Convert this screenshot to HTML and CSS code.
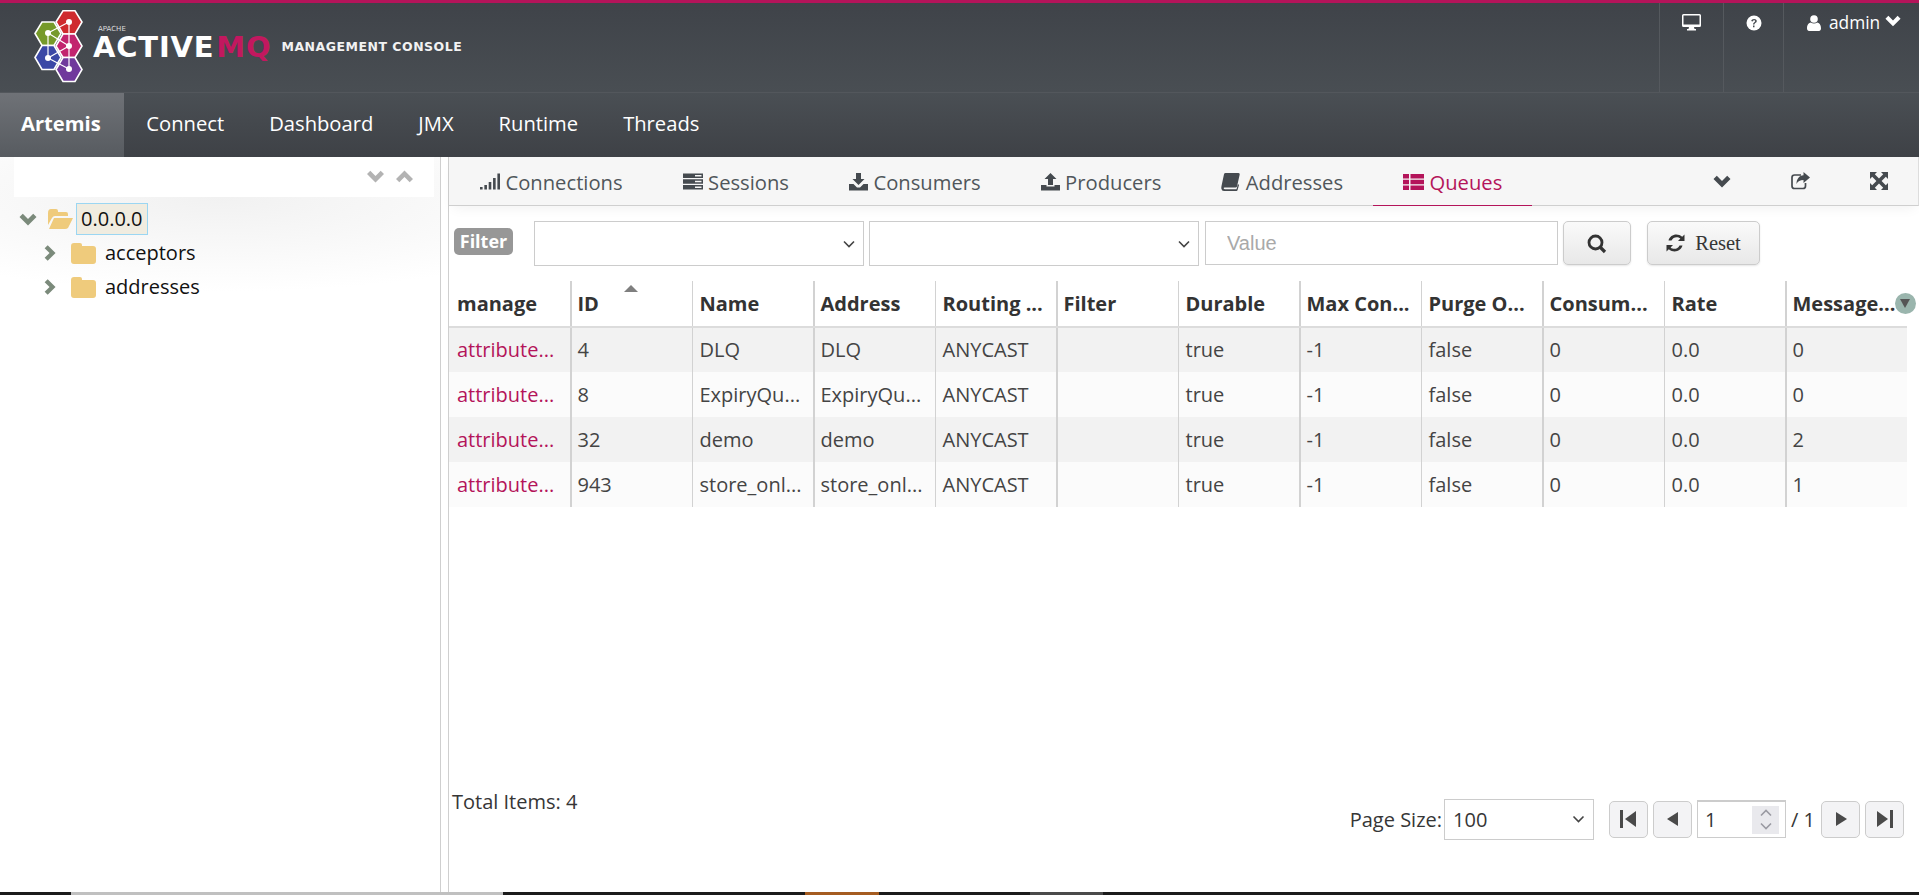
FILE: index.html
```html
<!DOCTYPE html>
<html lang="en">
<head>
    <meta charset="UTF-8">
    <title>ActiveMQ Artemis Console</title>
    <link rel="stylesheet" href="styles.css">
</head>
<body>
    <svg class="icon-defs" width="0" height="0">
        <symbol id="i-chev-down" viewBox="0 0 18 13"><path d="M0.5 4 L3.8 0.7 L9 6 L14.2 0.7 L17.5 4 L9 12.5 Z"/></symbol>
        <symbol id="i-chev-up" viewBox="0 0 18 13"><path d="M0.5 9 L3.8 12.3 L9 7 L14.2 12.3 L17.5 9 L9 0.5 Z"/></symbol>
        <symbol id="i-chev-right" viewBox="0 0 13 18"><path d="M4 0.5 L0.7 3.8 L6 9 L0.7 14.2 L4 17.5 L12.5 9 Z"/></symbol>
        <symbol id="i-caret" viewBox="0 0 12 8"><path d="M1 1.5 L6 6.5 L11 1.5" fill="none" stroke="#444" stroke-width="1.6"/></symbol>
    </svg>

    <header class="topbar">
        <div class="brand">
            <svg class="brand-logo" width="51" height="74" viewBox="0 0 51 74">
                <g stroke="#fff" stroke-width="1.6">
                    <path d="M2 23.5 L9 12 L21 12 L28 23.5 L21 35.5 L9 35.5 Z" fill="#769a2a"/>
                    <path d="M2 47.5 L9 35.5 L21 35.5 L28 47.5 L21 59.5 L9 59.5 Z" fill="#3b48a6"/>
                    <path d="M23 12 L30 0.8 L42 0.8 L49 12 L42 24 L30 24 Z" fill="#cf2a2e"/>
                    <path d="M23 36 L30 24 L42 24 L49 36 L42 47.5 L30 47.5 Z" fill="#c2246e"/>
                    <path d="M23 59.5 L30 47.5 L42 47.5 L49 59.5 L42 71.5 L30 71.5 Z" fill="#70399c"/>
                </g>
                <path fill="none" stroke="#fff" stroke-width="1.2" d="M36 12 V59 M15 23 L36 12 M15 23 V48 M15 23 L36 36 M15 48 L36 36 M15 48 L36 59"/>
                <g fill="#fff">
                    <circle cx="36" cy="12" r="3"/><circle cx="36" cy="36" r="3"/><circle cx="36" cy="59" r="3"/>
                    <circle cx="15" cy="23" r="3"/><circle cx="15" cy="48" r="3"/>
                </g>
            </svg>
            <div class="brand-name">
                <span class="brand-apache">APACHE</span>
                <span class="brand-active">ACTIVE<em>MQ</em></span>
            </div>
            <span class="brand-sub">MANAGEMENT CONSOLE</span>
        </div>
        <div class="util">
            <div class="util-item util-monitor">
                <svg width="19" height="17" viewBox="0 0 19 17"><path fill="#fff" fill-rule="evenodd" d="M1.5 0 H17.5 A1.5 1.5 0 0 1 19 1.5 V11.5 A1.5 1.5 0 0 1 17.5 13 H12 L12.5 15 H14 V16.5 H5 V15 H6.5 L7 13 H1.5 A1.5 1.5 0 0 1 0 11.5 V1.5 A1.5 1.5 0 0 1 1.5 0 Z M1.5 1.5 V10.5 H17.5 V1.5 Z"/></svg>
            </div>
            <div class="util-item util-help">
                <svg width="16" height="16" viewBox="0 0 16 16"><circle cx="8" cy="8" r="7.5" fill="#fff"/><path d="M5.2 6 C5.4 3.2 10.8 3.2 10.8 6 C10.8 8 8.4 7.8 8.4 9.6 H7 C7 7.4 9.2 7.4 9.2 6.1 C9.2 5 7 5 6.8 6.5 Z M7 10.5 H8.5 V12.2 H7 Z" fill="#454a4f"/></svg>
            </div>
            <div class="util-item util-user">
                <svg width="14" height="16" viewBox="0 0 14 16"><circle cx="7" cy="4" r="3.8" fill="#fff"/><path d="M0 13.5 C0 9.5 2 8 3.8 7.6 C5.5 8.8 8.5 8.8 10.2 7.6 C12 8 14 9.5 14 13.5 C14 15 13 16 12 16 H2 C1 16 0 15 0 13.5Z" fill="#fff"/></svg>
                <span>admin</span>
                <svg class="util-chev" width="16" height="12"><use href="#i-chev-down"/></svg>
            </div>
        </div>
    </header>

    <nav class="mainnav">
        <a class="nav-link nav-active">Artemis</a>
        <a class="nav-link">Connect</a>
        <a class="nav-link">Dashboard</a>
        <a class="nav-link">JMX</a>
        <a class="nav-link">Runtime</a>
        <a class="nav-link">Threads</a>
    </nav>

    <main class="page">
        <aside class="tree-pane">
            <div class="tree-tools">
                <svg class="tool-chev" width="19" height="13"><use href="#i-chev-down"/></svg>
                <svg class="tool-chev" width="19" height="13"><use href="#i-chev-up"/></svg>
            </div>
            <ul class="tree">
                <li class="tree-row">
                    <svg class="tree-exp" width="18" height="13"><use href="#i-chev-down"/></svg>
                    <svg class="tree-folder" width="27" height="22" viewBox="0 0 27 22"><path fill="#efcb7c" d="M1 5 Q1 1 4 1 H9 Q11 1 11 3 V4 H19 Q21 4 21 6 V8 H8 Q6 8 5 10 L1 17 Z M7 10 H26 L21 20 Q20 21 18 21 H2 Z"/></svg>
                    <span class="tree-label tree-selected">0.0.0.0</span>
                </li>
                <li class="tree-row tree-child">
                    <svg class="tree-exp" width="12" height="18"><use href="#i-chev-right"/></svg>
                    <svg class="tree-folder" width="25" height="21" viewBox="0 0 25 21"><path fill="#efcb7c" d="M0 3 Q0 0 3 0 H9 Q11 0 11 2 V3 H22 Q25 3 25 6 V18 Q25 21 22 21 H3 Q0 21 0 18 Z"/></svg>
                    <span class="tree-label">acceptors</span>
                </li>
                <li class="tree-row tree-child">
                    <svg class="tree-exp" width="12" height="18"><use href="#i-chev-right"/></svg>
                    <svg class="tree-folder" width="25" height="21" viewBox="0 0 25 21"><path fill="#efcb7c" d="M0 3 Q0 0 3 0 H9 Q11 0 11 2 V3 H22 Q25 3 25 6 V18 Q25 21 22 21 H3 Q0 21 0 18 Z"/></svg>
                    <span class="tree-label">addresses</span>
                </li>
            </ul>
        </aside>

        <section class="content">
            <div class="tabs">
                <a class="tab">
                    <svg width="20" height="17" viewBox="0 0 23 17" preserveAspectRatio="none"><path fill="#454a4f" d="M0 14 H3 V16.5 H0Z M5 12 H8 V16.5 H5Z M10 9 H13 V16.5 H10Z M15 5 H18 V16.5 H15Z M20 0.5 H23 V16.5 H20Z"/></svg>
                    Connections
                </a>
                <a class="tab">
                    <svg width="20" height="17" viewBox="0 0 20 17"><path fill="#454a4f" fill-rule="evenodd" d="M0 0.5 H20 V5 H0Z M0 6.2 H20 V10.8 H0Z M0 12 H20 V16.5 H0Z M12 2 V3.5 H18.5 V2Z M12 7.8 V9.3 H18.5 V7.8Z M12 13.5 V15 H18.5 V13.5Z"/></svg>
                    Sessions
                </a>
                <a class="tab">
                    <svg width="19" height="18" viewBox="0 0 19 18"><path fill="#454a4f" d="M7 0 H12 V6 H15.5 L9.5 12 L3.5 6 H7Z M0 11 H4.5 L8 14.5 H11 L14.5 11 H19 V17.5 H0Z"/></svg>
                    Consumers
                </a>
                <a class="tab">
                    <svg width="19" height="18" viewBox="0 0 19 18"><path fill="#454a4f" d="M9.5 0 L15.5 6 H12 V12 H7 V6 H3.5Z M0 12 H5.5 V13.5 H13.5 V12 H19 V17.5 H0Z"/></svg>
                    Producers
                </a>
                <a class="tab">
                    <svg width="19" height="18" viewBox="0 0 19 18"><path fill="#454a4f" d="M4.5 0 H17.5 Q19 0 18.7 1.5 L16 13.5 Q15.7 14.5 14.5 14.5 H3.5 Q2.5 14.5 2.7 15.5 Q3 16.3 4 16.3 H15.5 L17 11 L18 12 L16.5 17.3 Q16.2 18 15.5 18 H3 Q0.7 18 0.3 15.5 Q0.2 14.5 0.5 13 L3 1.2 Q3.3 0 4.5 0 Z"/></svg>
                    Addresses
                </a>
                <a class="tab tab-active">
                    <svg width="21" height="16" viewBox="0 0 21 16"><path fill="#b4145a" d="M0 0 H6 V4.4 H0Z M7.5 0 H21 V4.4 H7.5Z M0 5.8 H6 V10.2 H0Z M7.5 5.8 H21 V10.2 H7.5Z M0 11.6 H6 V16 H0Z M7.5 11.6 H21 V16 H7.5Z"/></svg>
                    Queues
                </a>
                <div class="tab-tools">
                    <svg class="tab-chev" width="18" height="13"><use href="#i-chev-down"/></svg>
                    <svg width="19" height="18" viewBox="0 0 19 18"><path fill="none" stroke="#454a4f" stroke-width="1.7" d="M10 3 H3.5 Q1 3 1 5.5 V14 Q1 16.5 3.5 16.5 H12 Q14.5 16.5 14.5 14 V11"/><path fill="#454a4f" d="M12.5 0 L19 5.5 L12.5 11 V8 C9 8 7 9 5.5 12 C5.5 7 8 3.5 12.5 3.2Z"/></svg>
                    <svg width="18" height="18" viewBox="0 0 18 18"><path fill="#454a4f" d="M0 0 H7 L4.8 2.2 L9 6.4 L13.2 2.2 L11 0 H18 V7 L15.8 4.8 L11.6 9 L15.8 13.2 L18 11 V18 H11 L13.2 15.8 L9 11.6 L4.8 15.8 L7 18 H0 V11 L2.2 13.2 L6.4 9 L2.2 4.8 L0 7Z"/></svg>
                </div>
            </div>

            <div class="filter-bar">
                <span class="filter-badge">Filter</span>
                <div class="select select-col"><svg width="12" height="8"><use href="#i-caret"/></svg></div>
                <div class="select select-op"><svg width="12" height="8"><use href="#i-caret"/></svg></div>
                <input class="filter-value" type="text" placeholder="Value">
                <button class="btn btn-search">
                    <svg width="20" height="20" viewBox="0 0 20 20"><circle cx="8.5" cy="8.5" r="6.5" fill="none" stroke="#333" stroke-width="2.8"/><path d="M13 13 L18 18" stroke="#333" stroke-width="3.2"/></svg>
                </button>
                <button class="btn btn-reset">
                    <svg width="19" height="18" viewBox="0 0 19 18"><path fill="#333" d="M18.5 0.5 V7 H12 L14.4 4.6 C11.5 2 7 3 5.5 6.5 L2.5 6.5 C4 1 11 -1.5 16.2 2.8Z M0.5 17.5 V11 H7 L4.6 13.4 C7.5 16 12 15 13.5 11.5 L16.5 11.5 C15 17 8 19.5 2.8 15.2Z"/></svg>
                    Reset
                </button>
            </div>

            <table class="grid">
                <thead>
                    <tr>
                        <th>manage</th>
                        <th class="sorted">ID</th>
                        <th>Name</th>
                        <th>Address</th>
                        <th>Routing ...</th>
                        <th>Filter</th>
                        <th>Durable</th>
                        <th>Max Con...</th>
                        <th>Purge O...</th>
                        <th>Consum...</th>
                        <th>Rate</th>
                        <th class="last-col">Message...<span class="col-menu"></span></th>
                    </tr>
                </thead>
                <tbody>
                    <tr>
                        <td><a>attribute...</a></td><td>4</td><td>DLQ</td><td>DLQ</td><td>ANYCAST</td><td></td><td>true</td><td>-1</td><td>false</td><td>0</td><td>0.0</td><td>0</td>
                    </tr>
                    <tr>
                        <td><a>attribute...</a></td><td>8</td><td>ExpiryQu...</td><td>ExpiryQu...</td><td>ANYCAST</td><td></td><td>true</td><td>-1</td><td>false</td><td>0</td><td>0.0</td><td>0</td>
                    </tr>
                    <tr>
                        <td><a>attribute...</a></td><td>32</td><td>demo</td><td>demo</td><td>ANYCAST</td><td></td><td>true</td><td>-1</td><td>false</td><td>0</td><td>0.0</td><td>2</td>
                    </tr>
                    <tr>
                        <td><a>attribute...</a></td><td>943</td><td>store_onl...</td><td>store_onl...</td><td>ANYCAST</td><td></td><td>true</td><td>-1</td><td>false</td><td>0</td><td>0.0</td><td>1</td>
                    </tr>
                </tbody>
            </table>

            <div class="grid-footer">
                <div class="total">Total Items: 4</div>
                <div class="pager">
                    <span class="pager-label">Page Size:</span>
                    <div class="select select-size"><span>100</span><svg width="13" height="8"><use href="#i-caret"/></svg></div>
                    <button class="page-btn"><svg width="17" height="18" viewBox="0 0 17 18"><path fill="#4a4a4a" d="M0 0 H3 V18 H0Z M5 9 L16 1 V17Z"/></svg></button>
                    <button class="page-btn"><svg width="12" height="14" viewBox="0 0 12 14"><path fill="#4a4a4a" d="M0 7 L11 0 V14Z"/></svg></button>
                    <div class="page-input">
                        <span>1</span>
                        <div class="spin">
                            <svg width="12" height="8"><path d="M1 6.5 L6 1.5 L11 6.5" fill="none" stroke="#9a9aa2" stroke-width="1.6"/></svg>
                            <svg width="12" height="8"><path d="M1 1.5 L6 6.5 L11 1.5" fill="none" stroke="#9a9aa2" stroke-width="1.6"/></svg>
                        </div>
                    </div>
                    <span class="page-of">/ 1</span>
                    <button class="page-btn"><svg width="12" height="14" viewBox="0 0 12 14"><path fill="#4a4a4a" d="M1 0 L12 7 L1 14Z"/></svg></button>
                    <button class="page-btn"><svg width="17" height="18" viewBox="0 0 17 18"><path fill="#4a4a4a" d="M1 1 L12 9 L1 17Z M14 0 H17 V18 H14Z"/></svg></button>
                </div>
            </div>
        </section>
    </main>

    <div class="taskbar">
        <span class="task-thumb"></span>
        <span class="task-app"></span>
        <span class="task-other"></span>
    </div>
</body>
</html>
```

FILE: styles.css
```css
* {
    margin: 0;
    padding: 0;
    box-sizing: border-box;
}

html, body {
    height: 100%;
    overflow: hidden;
}

body {
    display: flex;
    flex-direction: column;
    font-family: "Open Sans", "Noto Sans", sans-serif;
    font-size: 20px;
    color: #363636;
    background: #fff;
}

.icon-defs {
    position: absolute;
}

/* top bars */
.topbar {
    height: 93px;
    flex: none;
    display: flex;
    justify-content: space-between;
    border-top: 3px solid #b4145a;
    border-bottom: 1px solid #53575c;
    background: linear-gradient(#3f4349, #494e53);
}

.brand {
    display: flex;
    align-items: flex-start;
    padding: 7px 0 0 33px;
}

.brand-logo {
    flex: none;
}

.brand-name {
    display: flex;
    flex-direction: column;
    margin-left: 9px;
    padding-top: 15px;
    font-family: "DejaVu Sans", sans-serif;
    font-weight: bold;
    color: #fff;
}

.brand-apache {
    font-size: 7px;
    font-weight: normal;
    line-height: 8px;
    padding-left: 5px;
    color: #ddd;
}

.brand-active {
    font-size: 29px;
    line-height: 28px;
    letter-spacing: 0.8px;
}

.brand-active em {
    font-style: normal;
    margin-left: 2px;
    color: #c2185f;
}

.brand-sub {
    margin: 29px 0 0 10px;
    font-family: "DejaVu Sans", sans-serif;
    font-weight: bold;
    font-size: 12.5px;
    letter-spacing: 0.5px;
    color: #f2f2f2;
}

.util {
    display: flex;
}

.util-item {
    display: flex;
    align-items: flex-start;
    color: #fff;
    border-left: 1px solid #55595e;
    padding-top: 11px;
}

.util-monitor {
    width: 64px;
    justify-content: center;
}

.util-help {
    width: 60px;
    padding: 12px 0 0 22px;
}

.util-user {
    width: 136px;
    padding: 12px 0 0 23px;
    font-size: 17.3px;
    line-height: 20px;
}

.util-user span {
    margin: -2px 0 0 8px;
}

.util-chev {
    fill: #fff;
    margin: 0 0 0 5px;
}

.mainnav {
    height: 64px;
    flex: none;
    display: flex;
    background: linear-gradient(#4a4f54, #3e4146);
}

.nav-link {
    display: flex;
    align-items: center;
    padding: 0 22.5px 5px;
    font-size: 20.2px;
    color: #fff;
}

.nav-active {
    padding: 0 23px 5px 21px;
    font-weight: bold;
    background: linear-gradient(#6f7277, #575b60);
}

.page {
    flex: 1;
    min-height: 0;
    display: flex;
}

/* tree */
.tree-pane {
    width: 441px;
    flex: none;
    border-right: 1px solid #cfcfcf;
    background: radial-gradient(ellipse 400px 95px at 50% 40px, #f1f1f1 0, #fff 100%);
    padding: 0 0 0 14px;
}

.tree-tools {
    width: 420px;
    height: 40px;
    background: #fff;
    display: flex;
    justify-content: flex-end;
    gap: 10px;
    padding: 13px 20px 0 0;
}

.tool-chev {
    fill: #b3b3b3;
}

.tree {
    list-style: none;
    margin-top: 5px;
}

.tree-row {
    height: 34px;
    display: flex;
    align-items: center;
    color: #111;
}

.tree-exp {
    fill: #7b8a7b;
    margin-left: 5px;
}

.tree-folder {
    flex: none;
    margin-left: 10px;
}

.tree-label {
    padding: 0 4px;
    line-height: 30px;
    margin-left: 2px;
}

.tree-selected {
    background: #f0ece0;
    border: 1px solid #9bd6f2;
}

.tree-child {
    padding-left: 25px;
}

.tree-child .tree-folder {
    margin-left: 15px;
}

.tree-child .tree-label {
    margin-left: 5px;
}

/* right side */
.content {
    flex: 1;
    min-width: 0;
    margin-left: 7px;
    display: flex;
    flex-direction: column;
    border-left: 1px solid #cfcfcf;
}

.tabs {
    height: 49px;
    flex: none;
    display: flex;
    background: #f6f6f6;
    border-bottom: 1px solid #cfcfcf;
    border-right: 1px solid #ddd;
    box-shadow: 0 6px 12px -4px rgba(0, 0, 0, 0.06);
    font-size: 20.2px;
    padding-left: 31px;
}

.tab {
    display: flex;
    align-items: center;
    gap: 5.5px;
    margin-right: 60px;
    padding-top: 1px;
    color: #50565b;
}

.tab-active {
    color: #b4145a;
    margin-left: -30px;
    margin-right: 0;
    padding: 1px 30px 0;
    height: 49px;
    border-bottom: 1px solid #b4145a;
}

.tab-tools {
    margin-left: auto;
    display: flex;
    align-items: center;
    gap: 60px;
    padding-right: 30px;
}

.tab-chev {
    fill: #454a4f;
}

.filter-bar {
    height: 65px;
    flex: none;
    display: flex;
    align-items: flex-start;
    padding: 15px 0 0 5px;
}

.filter-badge {
    width: 59px;
    height: 27px;
    margin: 7px 21px 0 0;
    border-radius: 5px;
    background: #979797;
    color: #fff;
    font-weight: bold;
    font-size: 18px;
    line-height: 26px;
    text-align: center;
}

.select {
    height: 45px;
    display: flex;
    align-items: center;
    justify-content: flex-end;
    padding-right: 8px;
    border: 1px solid #ccc;
    background: #fff;
}

.select-col {
    width: 330px;
    margin-right: 5px;
}

.select-op {
    width: 330px;
    margin-right: 6px;
}

.filter-value {
    width: 353px;
    height: 44px;
    margin-right: 5px;
    border: 1px solid #ccc;
    padding-left: 21px;
    font-family: "Liberation Sans", sans-serif;
    font-size: 20px;
    outline: none;
}

.filter-value::placeholder {
    color: #a9a9a9;
    opacity: 1;
}

.btn {
    height: 44px;
    border: 1px solid #ccc;
    border-radius: 5px;
    background: linear-gradient(#fafafa, #e8e8e8);
    box-shadow: 0 1px 2px rgba(0, 0, 0, 0.1);
    display: flex;
    align-items: center;
    justify-content: center;
}

.btn-search {
    width: 68px;
    margin-right: 16px;
}

.btn-search svg {
    margin-top: 2px;
}

.btn-reset {
    width: 113px;
    gap: 10px;
    font-family: "Liberation Serif", serif;
    font-size: 20.5px;
    color: #363636;
}

/* table */
.grid {
    width: 1458px;
    flex: none;
    border-collapse: collapse;
    table-layout: fixed;
    margin-top: 10px;
}

.grid th, .grid td {
    padding: 0 7px;
    text-align: left;
    white-space: nowrap;
    overflow: hidden;
    border-left: 1px solid #d2d2d2;
}

.grid th:nth-child(even), .grid td:nth-child(even) {
    border-left-width: 2px;
    padding-left: 6px;
}

.grid th:first-child, .grid td:first-child {
    border-left: 0;
    padding-left: 8px;
}

.grid th {
    height: 46px;
    font-weight: bold;
    color: #333;
    border-bottom: 2px solid #dcdcdc;
}

.grid td {
    height: 45px;
    padding-bottom: 1px;
    color: #444;
}

.grid tbody tr:nth-child(odd) {
    background: #f2f2f2;
}

.grid tbody tr:nth-child(even) {
    background: #fbfbfb;
}

.grid a {
    color: #b4145a;
}

.sorted, .last-col {
    position: relative;
}

/* sort arrow and column menu sit over the header cell */
.sorted::after {
    content: "";
    position: absolute;
    left: 52px;
    top: 4px;
    border: 7px solid transparent;
    border-top: 0;
    border-bottom: 7px solid #7f7f7f;
}

.grid th.last-col {
    overflow: visible;
}

.col-menu {
    position: absolute;
    right: -9px;
    top: 12px;
    width: 21px;
    height: 21px;
    border-radius: 50%;
    background: #9ab5ad;
}

.col-menu::after {
    content: "";
    position: absolute;
    left: 5px;
    top: 6px;
    border: 5.5px solid transparent;
    border-bottom: 0;
    border-top: 9px solid #555;
}

/* footer */
.grid-footer {
    flex: 1;
    display: flex;
    justify-content: space-between;
    padding: 0 15px 0 3px;
}

.total {
    margin-top: 283px;
    line-height: 24px;
}

.pager {
    display: flex;
    align-items: center;
    gap: 5px;
    margin-top: 272px;
    height: 80px;
}

.pager-label {
    margin-right: -3px;
}

.select-size {
    width: 150px;
    height: 41px;
    margin-right: 10px;
    justify-content: space-between;
    padding: 0 8px 0 8px;
}

.page-btn {
    width: 39px;
    height: 37px;
    border: 1px solid #ccc;
    border-radius: 5px;
    background: #f3f3f5;
    display: flex;
    align-items: center;
    justify-content: center;
}

.page-input {
    width: 89px;
    height: 38px;
    border: 1px solid #ccc;
    border-width: 2px 1px 1px;
    background: #fff;
    display: flex;
    align-items: center;
    justify-content: space-between;
    padding: 0 6px 0 7px;
}

.spin {
    width: 27px;
    height: 28px;
    background: #e9e9ed;
    display: flex;
    flex-direction: column;
    align-items: center;
    justify-content: center;
    gap: 5px;
}

.page-of {
    margin-right: 1px;
}

/* sliver of the window behind, at the very bottom */
.taskbar {
    height: 3px;
    flex: none;
    display: flex;
    background: #1b1b1b;
}

.task-thumb {
    width: 432px;
    margin-left: 71px;
    background: #c0c0c0;
}

.task-app {
    width: 74px;
    margin-left: 302px;
    background: #a55c20;
}

.task-other {
    width: 73px;
    margin-left: 151px;
    background: #4a4a4a;
}
```
